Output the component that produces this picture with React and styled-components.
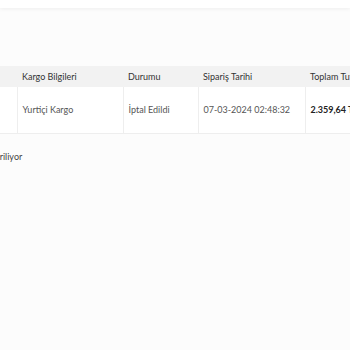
import React, { useLayoutEffect, useRef } from 'react';
import styled, { createGlobalStyle } from 'styled-components';

const GlobalStyle = createGlobalStyle`
  html, body {
    margin: 0;
    padding: 0;
    background: #fcfcfc;
    font-family: "Lato", "Open Sans", sans-serif;
  }
  *, *::before, *::after {
    box-sizing: border-box;
  }
`;

const TopBar = styled.div`
  height: 8px;
  background: #ffffff;
  box-shadow: 0 1px 4px rgba(0, 0, 0, 0.06);
  position: relative;
  z-index: 1;
`;

const Scroller = styled.div`
  width: 100%;
  overflow: hidden;
`;

const Content = styled.div`
  width: 760px;
  padding: 58px 20px 0 20px;
`;

const Table = styled.table`
  border-collapse: collapse;
  width: 708px;
  table-layout: fixed;
`;

const HeadCell = styled.th`
  background: #f2f2f2;
  height: 21px;
  padding: 0 5px;
  text-align: left;
  font-weight: 400;
  font-size: 9px;
  color: #333;
  white-space: nowrap;
  overflow: hidden;
  width: ${p => p.$w}px;
`;

const Cell = styled.td`
  height: 46px;
  padding: 0 5px;
  font-size: 9px;
  color: #555;
  background: #fff;
  border-left: 1px solid #eeeeee;
  border-bottom: 1px solid #eeeeee;
  white-space: nowrap;
  overflow: hidden;
  font-weight: ${p => (p.$bold ? 700 : 400)};
  ${p => p.$bold && 'color: #222;'}
  &:first-child {
    border-left: none;
  }
`;

const Footer = styled.div`
  margin-top: 17px;
  font-size: 9px;
  color: #444;
`;

const columns = [
  { title: 'Sipariş No', w: 138 },
  { title: 'Kargo Bilgileri', w: 106 },
  { title: 'Durumu', w: 75 },
  { title: 'Sipariş Tarihi', w: 107 },
  { title: 'Toplam Tutar', w: 110 },
  { title: 'İşlemler', w: 172 },
];

const row = ['#100245', 'Yurtiçi Kargo', 'İptal Edildi', '07-03-2024 02:48:32', '2.359,64 TL', 'Detay'];

export default function App() {
  const ref = useRef(null);

  useLayoutEffect(() => {
    if (ref.current) ref.current.scrollLeft = 141;
  }, []);

  return (
    <>
      <GlobalStyle />
      <TopBar />
      <Scroller ref={ref}>
        <Content>
          <Table>
            <thead>
              <tr>
                {columns.map(c => (
                  <HeadCell key={c.title} $w={c.w}>{c.title}</HeadCell>
                ))}
              </tr>
            </thead>
            <tbody>
              <tr>
                {row.map((v, i) => (
                  <Cell key={i} $bold={i === 4}>{v}</Cell>
                ))}
              </tr>
            </tbody>
          </Table>
          <Footer>1 kayıttan 1-1 arası kayıt gösteriliyor</Footer>
        </Content>
      </Scroller>
    </>
  );
}
